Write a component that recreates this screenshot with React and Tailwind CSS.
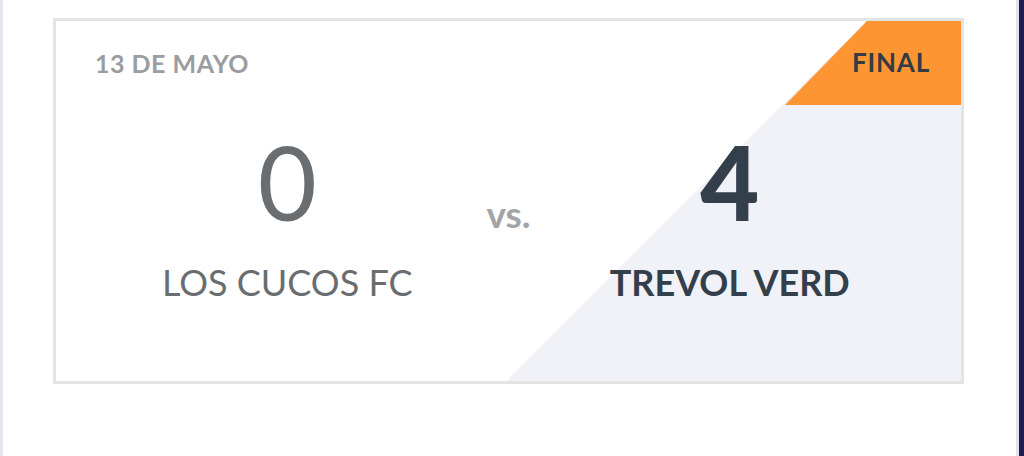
import React from "react";

const match = {
  date: "13 DE MAYO",
  status: "FINAL",
  home: { name: "LOS CUCOS FC", score: 0 },
  away: { name: "TREVOL VERD", score: 4 },
};

function ScoreCard() {
  return (
    <div className="relative mt-[18px] h-[366px] border-[3px] border-[#e4e4e4] bg-[linear-gradient(135deg,#ffffff_64.1%,#f1f2f7_64.1%)]">
      {/* status flag */}
      <div className="absolute right-0 top-0 flex h-[84px] w-[176px] items-center justify-end bg-[#fe9533] pr-[31px] [clip-path:polygon(82px_0,100%_0,100%_100%,0_100%)]">
        <span className="pb-[2px] text-[26px] font-bold leading-none tracking-[0.03em] text-[#333c44]">
          {match.status}
        </span>
      </div>

      <div className="pl-[39px] pt-[30px] text-[25px] font-bold leading-none tracking-[0.02em] text-[#9a9c9f]">
        {match.date}
      </div>

      <div className="mt-[55px] grid grid-cols-[1fr_80px_1fr] px-[50px]">
        <div className="flex flex-col items-center">
          <span className="text-[102px] leading-none text-[#6a6e71]">
            {match.home.score}
          </span>
          <span className="mt-[31px] text-[36px] leading-none text-[#696d70]">
            {match.home.name}
          </span>
        </div>
        <div className="flex justify-center">
          <span className="mt-[64px] text-[37px] font-bold leading-none text-[#a2a4a7]">
            vs.
          </span>
        </div>
        <div className="flex flex-col items-center">
          <span className="text-[102px] font-black leading-none text-[#333f4a]">
            {match.away.score}
          </span>
          <span className="mt-[31px] text-[36px] font-bold leading-none text-[#333f4a]">
            {match.away.name}
          </span>
        </div>
      </div>
    </div>
  );
}

export default function App() {
  return (
    <div className="flex h-[456px] w-[1024px] bg-white font-['Lato',sans-serif]">
      <div className="w-[3px] bg-[#e6e4ef]" />
      <div className="ml-[50px] mr-[52px] flex-1">
        <ScoreCard />
      </div>
      <div className="w-[3px] bg-[#e4e2ee]" />
      <div className="w-[5px] bg-[#1e1b57]" />
    </div>
  );
}
